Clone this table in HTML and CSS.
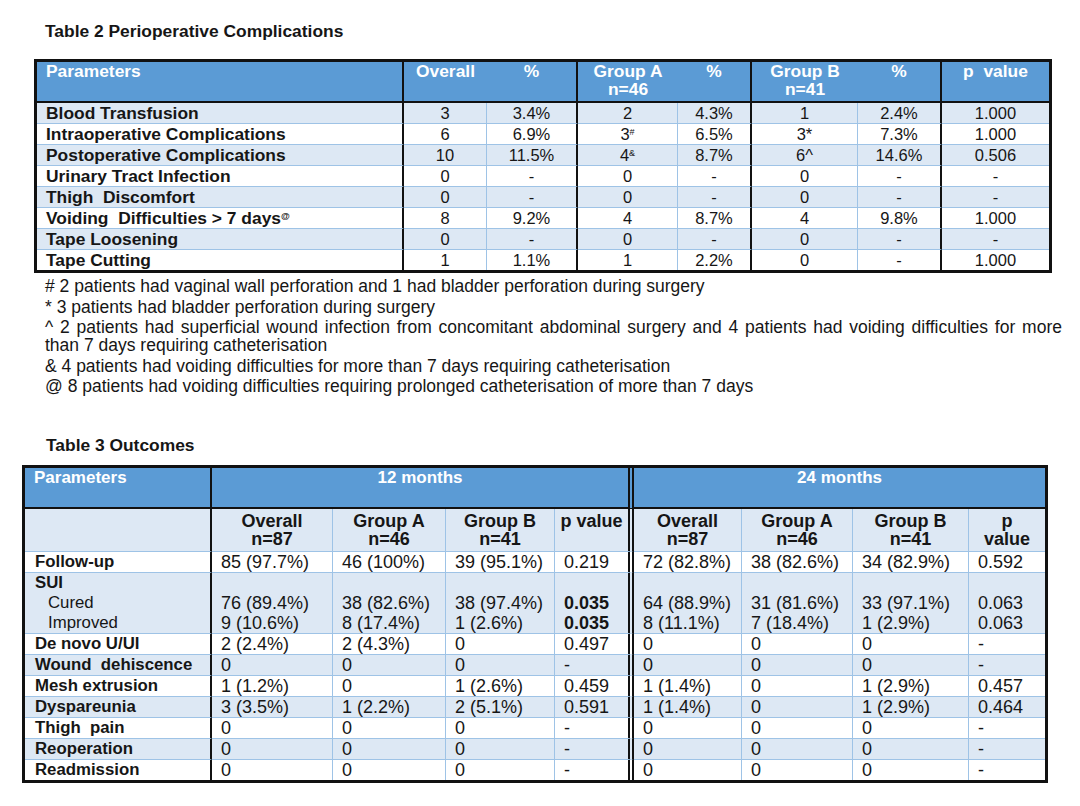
FILE: index.html
```html
<!DOCTYPE html>
<html>
<head>
<meta charset="utf-8">
<link rel="stylesheet" href="styles.css">
</head>
<body>
<div class="page">
  <h2 class="caption cap2">Table 2 Perioperative Complications</h2>
  <table class="t2">
    <colgroup>
      <col style="width:367px"><col style="width:83px"><col style="width:91px"><col style="width:100px"><col style="width:74px"><col style="width:106px"><col style="width:84px"><col style="width:107px">
    </colgroup>
    <thead>
      <tr>
        <th class="lbl thick">Parameters</th>
        <th>Overall</th>
        <th class="thick">%</th>
        <th>Group A<br>n=46</th>
        <th class="thick">%</th>
        <th>Group B<br>n=41</th>
        <th class="thick">%</th>
        <th class="last">p&nbsp; value</th>
      </tr>
    </thead>
    <tbody>
      <tr class="alt"><td class="lbl thick">Blood Transfusion</td><td class="light">3</td><td class="thick">3.4%</td><td class="light">2</td><td class="thick">4.3%</td><td class="light">1</td><td class="thick">2.4%</td><td>1.000</td></tr>
      <tr><td class="lbl thick">Intraoperative Complications</td><td class="light">6</td><td class="thick">6.9%</td><td class="light">3<sup>#</sup></td><td class="thick">6.5%</td><td class="light">3*</td><td class="thick">7.3%</td><td>1.000</td></tr>
      <tr class="alt"><td class="lbl thick">Postoperative Complications</td><td class="light">10</td><td class="thick">11.5%</td><td class="light">4<sup>&amp;</sup></td><td class="thick">8.7%</td><td class="light">6^</td><td class="thick">14.6%</td><td>0.506</td></tr>
      <tr><td class="lbl thick">Urinary Tract Infection</td><td class="light">0</td><td class="thick">-</td><td class="light">0</td><td class="thick">-</td><td class="light">0</td><td class="thick">-</td><td>-</td></tr>
      <tr class="alt"><td class="lbl thick">Thigh&nbsp; Discomfort</td><td class="light">0</td><td class="thick">-</td><td class="light">0</td><td class="thick">-</td><td class="light">0</td><td class="thick">-</td><td>-</td></tr>
      <tr><td class="lbl thick">Voiding&nbsp; Difficulties &gt; 7 days<sup>@</sup></td><td class="light">8</td><td class="thick">9.2%</td><td class="light">4</td><td class="thick">8.7%</td><td class="light">4</td><td class="thick">9.8%</td><td>1.000</td></tr>
      <tr class="alt"><td class="lbl thick">Tape Loosening</td><td class="light">0</td><td class="thick">-</td><td class="light">0</td><td class="thick">-</td><td class="light">0</td><td class="thick">-</td><td>-</td></tr>
      <tr class="lastrow"><td class="lbl thick">Tape Cutting</td><td class="light">1</td><td class="thick">1.1%</td><td class="light">1</td><td class="thick">2.2%</td><td class="light">0</td><td class="thick">-</td><td>1.000</td></tr>
    </tbody>
  </table>

  <div class="notes">
    <p># 2 patients had vaginal wall perforation and 1 had bladder perforation during surgery</p>
    <p>* 3 patients had bladder perforation during surgery</p>
    <p><span class="jline">^ 2 patients had superficial wound infection from concomitant abdominal surgery and 4 patients had voiding difficulties for more</span>than 7 days requiring catheterisation</p>
    <p>&amp; 4 patients had voiding difficulties for more than 7 days requiring catheterisation</p>
    <p>@ 8 patients had voiding difficulties requiring prolonged catheterisation of more than 7 days</p>
  </div>

  <h2 class="caption cap3">Table 3 Outcomes</h2>
  <table class="t3">
    <colgroup>
      <col style="width:187px"><col style="width:121px"><col style="width:113px"><col style="width:109px"><col style="width:79px"><col style="width:108px"><col style="width:111px"><col style="width:116px"><col style="width:76px">
    </colgroup>
    <thead>
      <tr class="h1">
        <th class="lbl thick">Parameters</th>
        <th colspan="4" class="dbl">12 months</th>
        <th colspan="4">24 months</th>
      </tr>
      <tr class="h2">
        <th class="thick"></th>
        <th class="light">Overall<br>n=87</th>
        <th class="light">Group A<br>n=46</th>
        <th class="light">Group B<br>n=41</th>
        <th class="dbl">p value</th>
        <th class="light">Overall<br>n=87</th>
        <th class="light">Group A<br>n=46</th>
        <th class="light">Group B<br>n=41</th>
        <th>p<br>value</th>
      </tr>
    </thead>
    <tbody>
      <tr><td class="lbl thick">Follow-up</td><td class="light">85 (97.7%)</td><td class="light">46 (100%)</td><td class="light">39 (95.1%)</td><td class="dbl">0.219</td><td class="light">72 (82.8%)</td><td class="light">38 (82.6%)</td><td class="light">34 (82.9%)</td><td>0.592</td></tr>
      <tr class="alt sui"><td class="lbl thick">SUI<br><span class="sub">Cured</span><br><span class="sub">Improved</span></td><td class="light"><br>76 (89.4%)<br>9 (10.6%)</td><td class="light"><br>38 (82.6%)<br>8 (17.4%)</td><td class="light"><br>38 (97.4%)<br>1 (2.6%)</td><td class="dbl b"><br>0.035<br>0.035</td><td class="light"><br>64 (88.9%)<br>8 (11.1%)</td><td class="light"><br>31 (81.6%)<br>7 (18.4%)</td><td class="light"><br>33 (97.1%)<br>1 (2.9%)</td><td><br>0.063<br>0.063</td></tr>
      <tr><td class="lbl thick">De novo U/UI</td><td class="light">2 (2.4%)</td><td class="light">2 (4.3%)</td><td class="light">0</td><td class="dbl">0.497</td><td class="light">0</td><td class="light">0</td><td class="light">0</td><td>-</td></tr>
      <tr class="alt"><td class="lbl thick">Wound&nbsp; dehiscence</td><td class="light">0</td><td class="light">0</td><td class="light">0</td><td class="dbl">-</td><td class="light">0</td><td class="light">0</td><td class="light">0</td><td>-</td></tr>
      <tr><td class="lbl thick">Mesh extrusion</td><td class="light">1 (1.2%)</td><td class="light">0</td><td class="light">1 (2.6%)</td><td class="dbl">0.459</td><td class="light">1 (1.4%)</td><td class="light">0</td><td class="light">1 (2.9%)</td><td>0.457</td></tr>
      <tr class="alt"><td class="lbl thick">Dyspareunia</td><td class="light">3 (3.5%)</td><td class="light">1 (2.2%)</td><td class="light">2 (5.1%)</td><td class="dbl">0.591</td><td class="light">1 (1.4%)</td><td class="light">0</td><td class="light">1 (2.9%)</td><td>0.464</td></tr>
      <tr><td class="lbl thick">Thigh&nbsp; pain</td><td class="light">0</td><td class="light">0</td><td class="light">0</td><td class="dbl">-</td><td class="light">0</td><td class="light">0</td><td class="light">0</td><td>-</td></tr>
      <tr class="alt"><td class="lbl thick">Reoperation</td><td class="light">0</td><td class="light">0</td><td class="light">0</td><td class="dbl">-</td><td class="light">0</td><td class="light">0</td><td class="light">0</td><td>-</td></tr>
      <tr class="lastrow"><td class="lbl thick">Readmission</td><td class="light">0</td><td class="light">0</td><td class="light">0</td><td class="dbl">-</td><td class="light">0</td><td class="light">0</td><td class="light">0</td><td>-</td></tr>
    </tbody>
  </table>
</div>
</body>
</html>
```

FILE: styles.css
```css
* { box-sizing: border-box; }
html, body {
  margin: 0;
  padding: 0;
  background: #ffffff;
}
body {
  font-family: "Liberation Sans", Arial, sans-serif;
  color: #161616;
}
.page {
  width: 1080px;
  height: 806px;
  overflow: hidden;
}
.caption {
  margin: 0;
  font-size: 17.4px;
  line-height: 20px;
  font-weight: bold;
}
.cap2 {
  padding: 21px 0 0 45px;
}
.cap3 {
  margin-top: 40px;
  padding-left: 46px;
}

table {
  border-collapse: separate;
  border-spacing: 0;
  table-layout: fixed;
  border: 3px solid #111;
}
.t2 {
  width: 1018px;
  margin: 18px 0 0 34px;
  font-size: 16.5px;
}
.t3 {
  width: 1026px;
  margin: 10px 0 0 22px;
  font-size: 18px;
}

th, td {
  padding: 0;
  white-space: nowrap;
}
th {
  font-weight: bold;
}

/* Table 2 */
.t2 thead th {
  background: #5b9bd5;
  color: #ffffff;
  font-size: 17.4px;
  height: 41px;
  line-height: 18px;
  vertical-align: top;
  text-align: center;
  border-bottom: 2px solid #111;
}
.t2 th.lbl, .t2 td.lbl {
  text-align: left;
  padding-left: 9px;
}
.t2 td {
  text-align: center;
  height: 21px;
  line-height: 20px;
  border-bottom: 1px solid #9ec3e6;
}
.t2 td.lbl {
  font-weight: bold;
  font-size: 17.4px;
}
.t2 tr.lastrow td { border-bottom: 0; height: 20px; }

.thick { border-right: 2px solid #111; }
.light { border-right: 1px solid #9ec3e6; }
.dbl { border-right: 6px double #111; }

tr.alt td { background: #dde8f4; }

sup {
  font-size: 9px;
  line-height: 0;
  vertical-align: 5px;
}

/* notes */
.notes {
  margin: 4px 0 0 45px;
  width: 1017px;
  font-size: 17.5px;
  line-height: 18px;
}
.notes p {
  margin: 0 0 2.5px 0;
}
.jline {
  display: block;
  text-align: justify;
  text-align-last: justify;
}

/* Table 3 */
.t3 th, .t3 td {
  text-align: left;
  padding-left: 9px;
}
.t3 tr.h1 th {
  background: #5b9bd5;
  color: #fff;
  font-size: 17px;
  height: 41px;
  line-height: 19px;
  padding-top: 0;
  vertical-align: top;
  border-bottom: 2px solid #111;
}
.t3 tr.h1 th + th { text-align: center; padding-left: 0; }
.t3 tr.h2 th {
  background: #dde8f4;
  height: 43px;
  line-height: 18px;
  padding-top: 3px;
  vertical-align: top;
  text-align: center;
  padding-left: 0;
  border-bottom: 1px solid #9ec3e6;
}
.t3 td {
  height: 21px;
  line-height: 20px;
  border-bottom: 1px solid #9ec3e6;
}
.t3 tr.sui td {
  height: 60px;
}
.t3 tr.lastrow td { border-bottom: 0; height: 20px; }
.t3 td.lbl { font-weight: bold; font-size: 16.8px; padding-left: 10px; }
.t3 td.b { font-weight: bold; }
.sub {
  font-weight: normal;
  padding-left: 13px;
}
```
